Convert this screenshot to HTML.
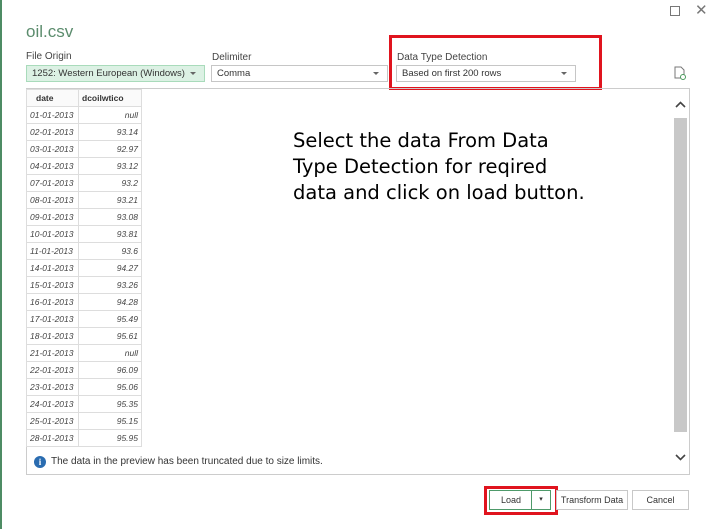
<!DOCTYPE html>
<html><head><style>
body{margin:0;width:720px;height:529px;background:#fff;position:relative;overflow:hidden;font-family:"Liberation Sans",sans-serif;color:#333}
.a{position:absolute}
.lbl{font-size:10px;color:#444}
.dd{position:absolute;height:15px;border:1px solid #c6c6c6;font-size:9.5px;line-height:15px;padding-left:5px;box-sizing:content-box;color:#333;white-space:nowrap;overflow:hidden}
.dd:after{content:"";position:absolute;right:8px;top:6px;border-left:3px solid transparent;border-right:3px solid transparent;border-top:3px solid #666}
table{border-collapse:collapse;font-size:8.5px;font-style:italic;color:#444;table-layout:fixed;width:115px}
td{border:1px solid #ddd;height:16px;padding:0 3px;white-space:nowrap;overflow:hidden;line-height:16px}
td:last-child{text-align:right}
th{border:1px solid #ddd;height:16px;font-size:8.5px;font-style:normal;color:#333;text-align:left;padding:0 3px;white-space:nowrap}
th:first-child{padding-left:9px}
.btn{position:absolute;border:1px solid #c8c8c8;font-size:9px;text-align:center;line-height:18px;height:18px;color:#333;background:#fff}
</style></head><body>
<div class="a" style="left:0;top:0;width:2px;height:529px;background:#4e8c64"></div>
<div class="a" style="left:670px;top:6px;width:8px;height:8px;border:1px solid #777"></div>
<div class="a" style="left:695px;top:1px;font-size:15px;color:#777">✕</div>
<div class="a" style="left:26px;top:22px;font-size:17px;color:#5b8c6d">oil.csv</div>
<div class="a lbl" style="left:26px;top:51px">File Origin</div>
<div class="dd" style="left:26px;top:65px;width:172px;background:#dcf1e4;border-color:#a9dbbb">1252: Western European (Windows)</div>
<div class="a lbl" style="left:212px;top:52px">Delimiter</div>
<div class="dd" style="left:211px;top:65px;width:170px">Comma</div>
<div class="a" style="left:389px;top:35px;width:207px;height:49px;border:3px solid #e0141e"></div>
<div class="a lbl" style="left:397px;top:52px">Data Type Detection</div>
<div class="dd" style="left:396px;top:65px;width:173px">Based on first 200 rows</div>
<svg class="a" style="left:673px;top:66px" width="14" height="14"><path d="M2 1h6l3 3v8H2z" fill="none" stroke="#777"/><circle cx="10" cy="11" r="2.5" fill="#fff" stroke="#4a9a5c"/></svg>
<div class="a" style="left:26px;top:88px;width:662px;height:385px;border:1px solid #ccc"></div>
<div class="a" style="left:674px;top:118px;width:13px;height:314px;background:#c8c8c8"></div>
<svg class="a" style="left:674px;top:100px" width="13" height="10"><path d="M2 7l4.5-4.5L11 7" fill="none" stroke="#444" stroke-width="1.6"/></svg>
<svg class="a" style="left:674px;top:452px" width="13" height="10"><path d="M2 3l4.5 4.5L11 3" fill="none" stroke="#444" stroke-width="1.6"/></svg>
<table class="a" style="left:26px;top:89px">
<colgroup><col style="width:52px"><col style="width:63px"></colgroup>
<tr style="background:#fafafa"><th>date</th><th>dcoilwtico</th></tr>
<tr><td>01-01-2013</td><td>null</td></tr>
<tr><td>02-01-2013</td><td>93.14</td></tr>
<tr><td>03-01-2013</td><td>92.97</td></tr>
<tr><td>04-01-2013</td><td>93.12</td></tr>
<tr><td>07-01-2013</td><td>93.2</td></tr>
<tr><td>08-01-2013</td><td>93.21</td></tr>
<tr><td>09-01-2013</td><td>93.08</td></tr>
<tr><td>10-01-2013</td><td>93.81</td></tr>
<tr><td>11-01-2013</td><td>93.6</td></tr>
<tr><td>14-01-2013</td><td>94.27</td></tr>
<tr><td>15-01-2013</td><td>93.26</td></tr>
<tr><td>16-01-2013</td><td>94.28</td></tr>
<tr><td>17-01-2013</td><td>95.49</td></tr>
<tr><td>18-01-2013</td><td>95.61</td></tr>
<tr><td>21-01-2013</td><td>null</td></tr>
<tr><td>22-01-2013</td><td>96.09</td></tr>
<tr><td>23-01-2013</td><td>95.06</td></tr>
<tr><td>24-01-2013</td><td>95.35</td></tr>
<tr><td>25-01-2013</td><td>95.15</td></tr>
<tr><td>28-01-2013</td><td>95.95</td></tr>
</table>
<div class="a" style="left:293px;top:128px;font-family:'DejaVu Sans',sans-serif;font-size:19.5px;line-height:26px;color:#000;white-space:nowrap">Select the data From Data<br>Type Detection for reqired<br>data and click on load button.</div>
<div class="a" style="left:34px;top:456px;width:12px;height:12px;border-radius:50%;background:#2a6cb0;color:#fff;font-size:9px;font-weight:bold;text-align:center;line-height:12px;font-family:'Liberation Serif',serif">i</div>
<div class="a" style="left:51px;top:456px;font-size:10px;color:#333">The data in the preview has been truncated due to size limits.</div>
<div class="a" style="left:484px;top:486px;width:68px;height:23px;border:3px solid #e0141e"></div>
<div class="btn" style="left:489px;top:490px;width:42px;border-color:#4e9a6a">Load</div>
<div class="btn" style="left:531px;top:490px;width:18px;border-color:#4e9a6a;font-size:7px">▾</div>
<div class="btn" style="left:556px;top:490px;width:70px">Transform Data</div>
<div class="btn" style="left:632px;top:490px;width:55px">Cancel</div>
</body></html>
